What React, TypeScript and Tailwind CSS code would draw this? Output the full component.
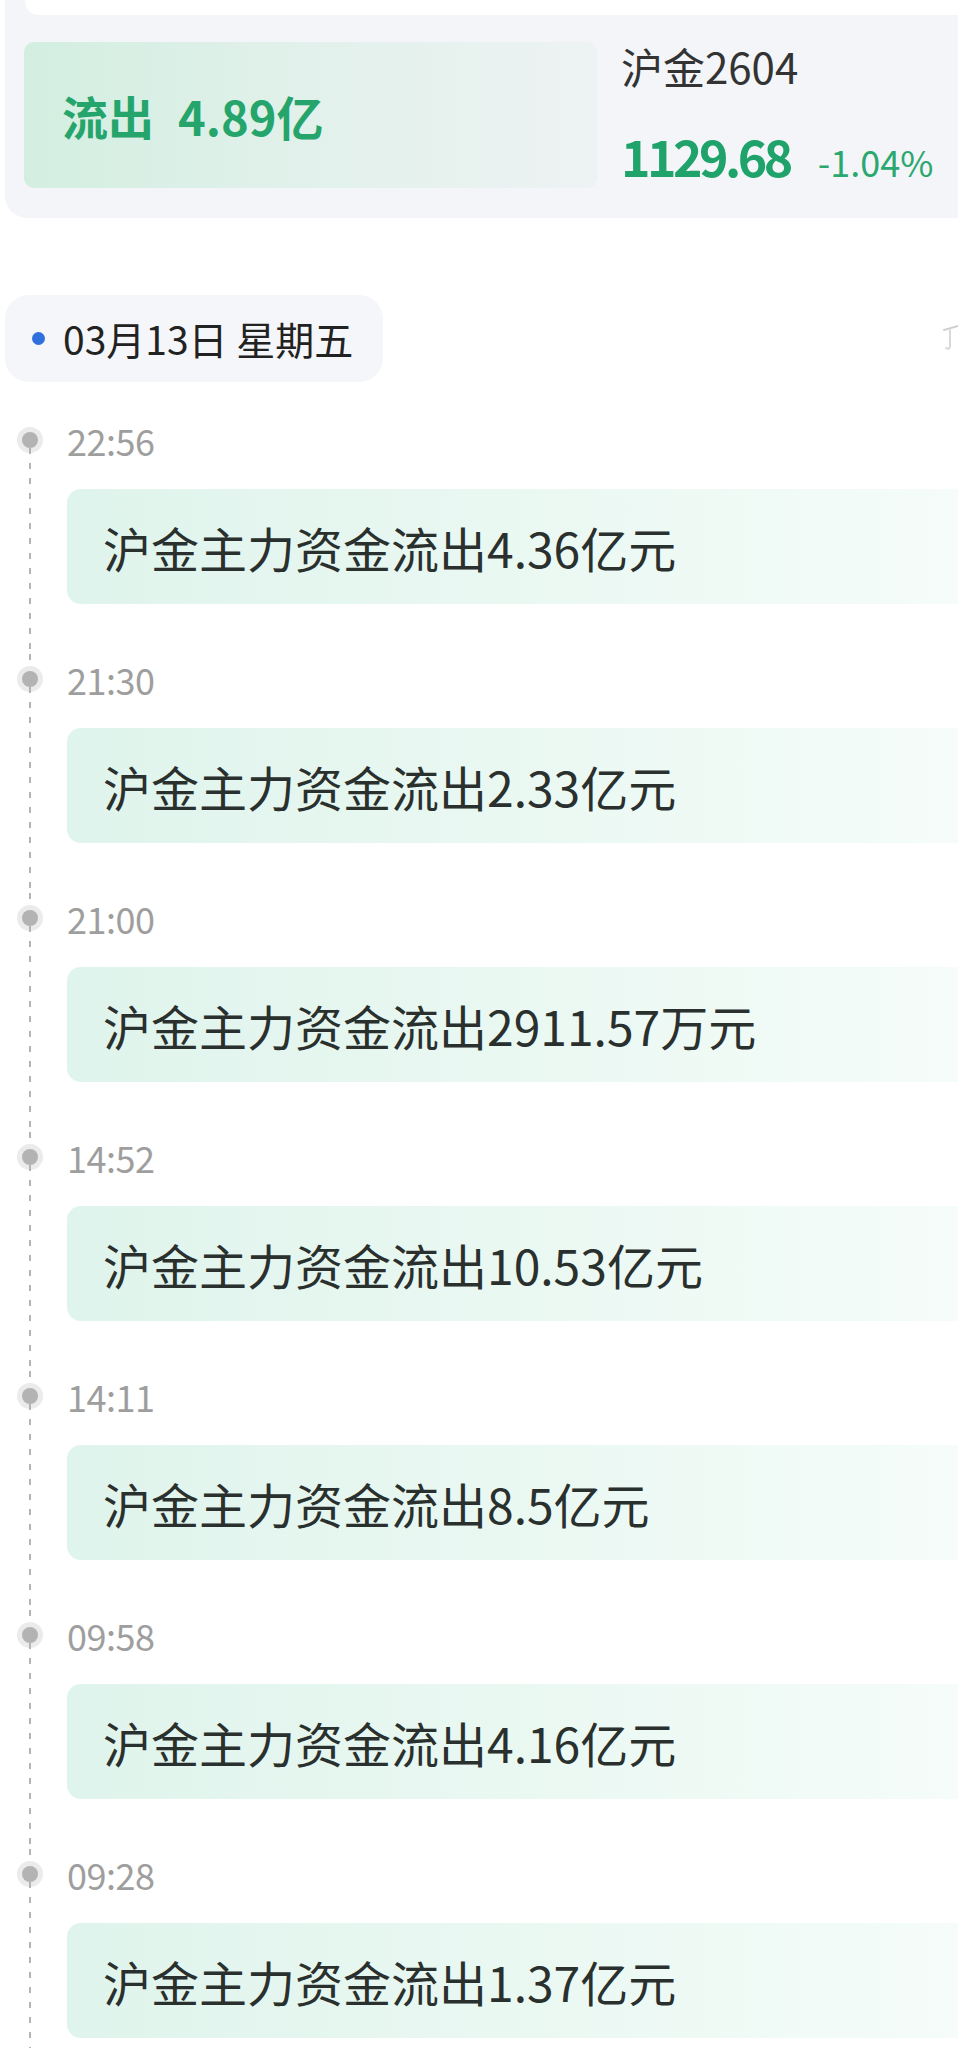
import React from 'react';

const items = [
  { time: '22:56', text: '沪金主力资金流出4.36亿元' },
  { time: '21:30', text: '沪金主力资金流出2.33亿元' },
  { time: '21:00', text: '沪金主力资金流出2911.57万元' },
  { time: '14:52', text: '沪金主力资金流出10.53亿元' },
  { time: '14:11', text: '沪金主力资金流出8.5亿元' },
  { time: '09:58', text: '沪金主力资金流出4.16亿元' },
  { time: '09:28', text: '沪金主力资金流出1.37亿元' },
];

const dashed =
  'w-[2px] bg-[repeating-linear-gradient(to_bottom,#b4b4b4_0px,#b4b4b4_6px,transparent_6px,transparent_15px)]';

function TimelineItem({ time, text, first }: { time: string; text: string; first: boolean }) {
  return (
    <div className="flex">
      <div className="w-[60px] flex flex-col items-center shrink-0">
        <div className={`h-[17px] ${first ? 'w-[2px]' : dashed}`} />
        <div className="w-[16px] h-[16px] rounded-full bg-[#b3b3b3] shadow-[0_0_0_5px_#ebebeb]" />
        <div className={`flex-1 ${dashed}`} />
      </div>
      <div className="flex-1 ml-[7px] pb-[50px]">
        <div className="h-[50px] flex items-center text-[36px] leading-none text-[#9e9e9e] tracking-[-0.5px]">{time}</div>
        <div className="mt-[24px] h-[115px] rounded-l-[14px] bg-gradient-to-r from-[#dff4ec] via-[#eaf8f2] to-[#f5fcf9] flex items-center pl-[36px]">
          <span className="text-[48px] leading-none text-[#2a302e]">{text}</span>
        </div>
      </div>
    </div>
  );
}

export default function App() {
  return (
    <div className="min-h-[2048px] bg-white overflow-hidden font-['Noto_Sans_CJK_SC','Noto_Sans',sans-serif]">
      <div className="ml-[5px] bg-[#f4f5f8] rounded-bl-[22px] pb-[30px]">
        <div className="ml-[20px] h-[15px] bg-white rounded-bl-[14px]" />
        <div className="flex mt-[27px]">
          <div className="ml-[19px] w-[573px] h-[146px] rounded-[10px] bg-gradient-to-r from-[#d3eee1] via-[#e2f1eb] to-[#edf3f3] flex items-center pl-[38px]">
            <span className="text-[46px] leading-none font-semibold text-[#25a56c]">流出</span>
            <span className="ml-[24px] text-[47px] leading-none font-semibold text-[#25a56c]">4.89亿</span>
          </div>
          <div className="ml-[24px] flex flex-col">
            <div className="text-[42px] leading-[48px] text-[#333333]">沪金2604</div>
            <div className="mt-[40px] flex items-baseline">
              <span className="text-[50px] leading-none font-bold text-[#1fa36a] tracking-[-3.5px]">1129.68</span>
              <span className="ml-[28px] text-[36px] leading-none text-[#2aa870]">-1.04%</span>
            </div>
          </div>
        </div>
      </div>

      <div className="mt-[77px] flex items-center justify-between">
        <div className="ml-[5px] h-[87px] w-[378px] rounded-[24px] bg-[#f5f6f9] flex items-center pl-[27px]">
          <span className="w-[13px] h-[13px] rounded-full bg-[#2f6fde]" />
          <span className="ml-[18px] text-[39px] leading-none text-[#222222]">03月13日 星期五</span>
        </div>
        <svg width="16" height="34" viewBox="0 0 16 34">
          <path d="M2 8 L16 4" stroke="#d0d0d0" strokeWidth="2" fill="none" strokeLinecap="round" />
          <path d="M8 8 L8 24 Q8 28 4 26" stroke="#d8d8d8" strokeWidth="2" fill="none" strokeLinecap="round" />
        </svg>
      </div>

      <div className="mt-[33px]">
        {items.map((it, i) => (
          <TimelineItem key={it.time} time={it.time} text={it.text} first={i === 0} />
        ))}
      </div>
    </div>
  );
}
